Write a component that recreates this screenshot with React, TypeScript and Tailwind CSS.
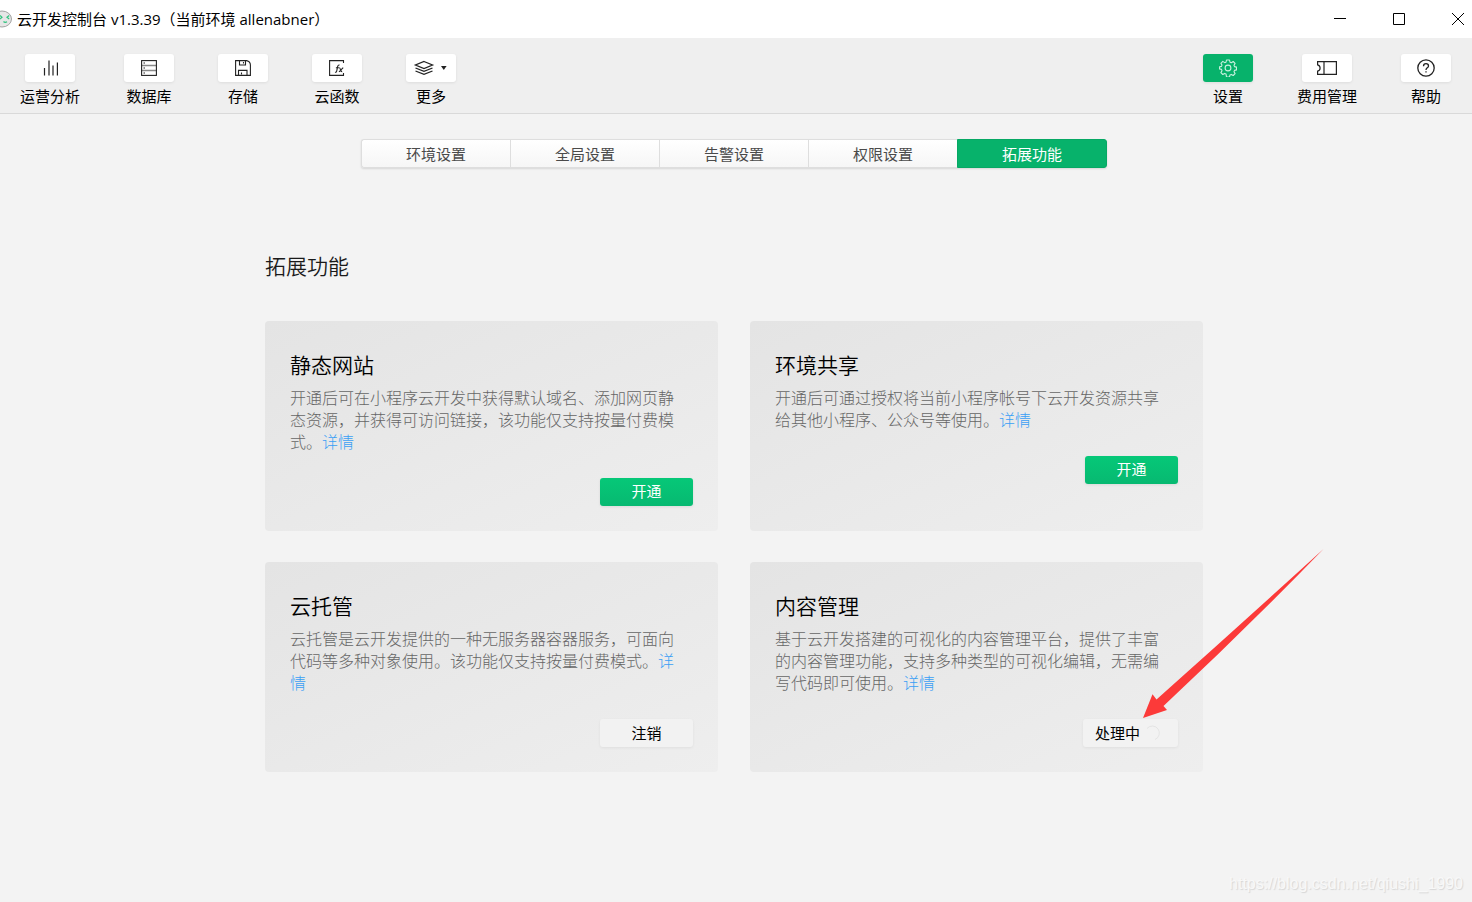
import React from "react";

function Logo() {
  return (
    <svg width="12" height="18" viewBox="0 0 12 18" aria-hidden="true">
      <ellipse cx="2" cy="9" rx="9.500" ry="8" fill="#e6e6e6" stroke="#a3a3a3" strokeWidth="1" />
      <path d="M0 5.500l2 1.800-2 1.800M9.200 5.500l-2.200 1.800 2.200 1.600" fill="none" stroke="#2fc47f" strokeWidth="1.200" />
      <path d="M3.500 11.500q1.500 1.500 3.500.2" fill="none" stroke="#2fc47f" strokeWidth="1.300" />
    </svg>
  );
}

function ChartIcon() {
  return (
    <svg width="16" height="16" viewBox="0 0 16 16" fill="none" stroke="#222" strokeWidth="1.2" aria-hidden="true">
      <path d="M2.500 8v7.500M7 0.500v15M11 5.500v10M15.400 2.500v13" />
    </svg>
  );
}

function DatabaseIcon() {
  return (
    <svg width="16" height="16" viewBox="0 0 16 16" fill="none" aria-hidden="true">
      <path d="M.5 5.500h15M.5 10.500h15" stroke="#888" strokeWidth="1.4" />
      <rect x=".6" y=".6" width="14.800" height="14.800" stroke="#222" strokeWidth="1.1" />
      <path d="M2.500 3h1.500M2.500 8h1.500M2.500 13h1.500" stroke="#222" />
    </svg>
  );
}

function DiskIcon() {
  return (
    <svg width="16" height="16" viewBox="0 0 16 16" fill="none" stroke="#222" strokeWidth="1.1" aria-hidden="true">
      <path d="M.6.600h11q3.800.8 3.800 4.500v10.300H.6z" />
      <path d="M4.500.600v4.400h6V.6M8.500 2v1.500" />
      <path d="M3.500 15.400v-5h8.500v5M6.500 12.500v2" />
    </svg>
  );
}

function FunctionIcon() {
  return (
    <svg width="16" height="16" viewBox="0 0 16 16" fill="none" stroke="#222" strokeWidth="1.1" aria-hidden="true">
      <path d="M14.500 3V.6H.6v14.800h13.900V13" />
      <path d="M6 12.200c1.200.3 1.600-.5 1.900-2l.7-3.500c.3-1.300.8-1.900 1.900-1.600M6.900 7.800h3" />
      <path d="M10.200 7.700c1.300-.2 1.200 4.300 3 3.900M14.200 7.600l-4.200 4.200" />
    </svg>
  );
}

function LayersIcon() {
  return (
    <svg width="38" height="16" viewBox="0 0 38 16" fill="none" aria-hidden="true">
      <path d="M12 1.500l8.500 3.500-8.500 3.500-8.500-3.500z" stroke="#222" strokeWidth="1.300" />
      <path d="M3.500 8l8.500 3.400 8.500-3.400M3.500 11l8.500 3.400 8.500-3.400" stroke="#222" strokeWidth="1.300" />
      <path d="M29 6h5.600l-2.800 4z" fill="#222" />
    </svg>
  );
}

function GearIcon() {
  return (
    <svg width="18" height="18" viewBox="0 0 18 18" fill="none" stroke="#c9f0de" strokeWidth="1.100" strokeLinejoin="round" aria-hidden="true">
      <path d="M7.500 1h3l.5 2.200 1.300.5 1.900-1.200 1.900 1.900-1.100 1.900.5 1.300 2 .5v2.800l-2 .5-.5 1.300 1.100 1.900-1.900 1.900-1.900-1.100-1.300.5-.5 2.100h-3L7 14.900l-1.300-.5-1.900 1.100-1.900-1.900L3 11.700l-.5-1.300-2-.5V7.900l2-.5L3 6.100 1.900 4.300l1.900-1.900 1.900 1.200L7 3.200z" />
      <circle cx="9" cy="9" r="2.900" />
    </svg>
  );
}

function TicketIcon() {
  return (
    <svg width="20" height="14" viewBox="0 0 20 14" fill="none" stroke="#222" strokeWidth="1.200" aria-hidden="true">
      <path d="M.6.600h18.800v12.800H.6v-3.200c1.600-.4 2.500-1.600 2.500-3.200S2.200 4.200.6 3.800zM7 .6v12.800" />
    </svg>
  );
}

function HelpIcon() {
  return (
    <svg width="18" height="18" viewBox="0 0 18 18" fill="none" stroke="#222" strokeWidth="1.300" aria-hidden="true">
      <circle cx="9" cy="9" r="8.200" />
      <path d="M6.500 7.200c0-1.500 1-2.500 2.500-2.500s2.500.9 2.500 2.200c0 1.800-2.500 2-2.500 4M9 12.300v1.300" />
    </svg>
  );
}

interface ToolProps {
  label: string;
  icon: React.ReactNode;
  active?: boolean;
}

function Tool({ label, icon, active }: ToolProps) {
  return (
    <button type="button" className="flex min-w-[50px] flex-col items-center">
      <span
        className={
          active
            ? "flex h-7 w-[50px] items-center justify-center rounded-[3px] bg-[#07b26b] shadow-[0_1px_3px_rgba(0,0,0,0.08)]"
            : "flex h-7 w-[50px] items-center justify-center rounded-[3px] bg-white shadow-[0_1px_3px_rgba(0,0,0,0.08)]"
        }
      >
        {icon}
      </span>
      <span className="mt-[3px] text-[15px] leading-[22px] whitespace-nowrap text-black">{label}</span>
    </button>
  );
}

const tabs = ["环境设置", "全局设置", "告警设置", "权限设置", "拓展功能"];

function Tabs() {
  return (
    <nav className="flex h-[29px] w-[746px] max-w-full rounded-[3px] shadow-[0_1px_2px_rgba(0,0,0,0.12)]">
      {tabs.map((tab) => (
        <button
          key={tab}
          type="button"
          className={
            tab === "拓展功能"
              ? "flex-1 rounded-r-[3px] border border-[#06a864] bg-[#07b26b] pt-px text-[15px] leading-[26px] text-white"
              : "flex-1 border border-r-0 border-[#dedede] bg-linear-to-b from-white to-[#f6f6f6] pt-px text-[15px] leading-[26px] text-[#4a4a4a] first:rounded-l-[3px]"
          }
        >
          {tab}
        </button>
      ))}
    </nav>
  );
}

interface CardProps {
  title: string;
  text: string;
  children: React.ReactNode;
}

function Card({ title, text, children }: CardProps) {
  return (
    <section className="rounded-[4px] bg-linear-to-br from-[#e4e4e4] to-[#eeeeee] p-[25px]">
      <h2 className="text-[21px] leading-[38px] font-[350] text-black">{title}</h2>
      <p className="mt-[3px] pr-2 text-base leading-[22px] font-light break-all text-[#666666]">
        {text}
        <a href="#detail" className="text-[#3a9ff5]">
          详情
        </a>
      </p>
      <div className="mt-[25px] flex justify-end">{children}</div>
    </section>
  );
}

function OpenButton() {
  return (
    <button
      type="button"
      className="h-7 w-[93px] rounded-[3px] bg-linear-to-b from-[#06c878] to-[#07b971] pb-0.5 text-[15px] leading-[26px] text-white shadow-[0_1px_3px_rgba(0,0,0,0.08)]"
    >
      开通
    </button>
  );
}

export default function App() {
  return (
    <div className="relative flex min-h-screen flex-col bg-[#f3f3f3] font-['Open_Sans','Noto_Sans_CJK_SC',sans-serif]">
      <header className="flex h-[38px] items-center justify-between bg-white">
        <div className="flex items-center gap-[5px]">
          <Logo />
          <h1 className="text-[15px] leading-6 text-black">云开发控制台 v1.3.39（当前环境 allenabner）</h1>
        </div>
        <div className="flex items-center gap-[47px] pr-2">
          <button type="button" aria-label="最小化">
            <svg width="12" height="12" viewBox="0 0 12 12" stroke="#000">
              <path d="M0 5.500h12" />
            </svg>
          </button>
          <button type="button" aria-label="最大化">
            <svg width="12" height="12" viewBox="0 0 12 12" fill="none" stroke="#000">
              <path d="M.5.500h11v11H.5z" />
            </svg>
          </button>
          <button type="button" aria-label="关闭">
            <svg width="12" height="12" viewBox="0 0 12 12" stroke="#000">
              <path d="M0 0l12 12M12 0L0 12" />
            </svg>
          </button>
        </div>
      </header>

      <div className="flex h-[76px] justify-between border-b border-[#d9d9d9] bg-[#efefef] pt-4 pr-[21px] pl-5">
        <div className="flex items-start gap-11">
          <Tool label="运营分析" icon={<ChartIcon />} />
          <Tool label="数据库" icon={<DatabaseIcon />} />
          <Tool label="存储" icon={<DiskIcon />} />
          <Tool label="云函数" icon={<FunctionIcon />} />
          <Tool label="更多" icon={<LayersIcon />} />
        </div>
        <div className="flex items-start gap-11">
          <Tool label="设置" icon={<GearIcon />} active />
          <Tool label="费用管理" icon={<TicketIcon />} />
          <Tool label="帮助" icon={<HelpIcon />} />
        </div>
      </div>

      <main className="flex flex-1 flex-col items-center pt-[25px] pr-1 pb-10">
        <Tabs />
        <div className="mt-[82px] w-full max-w-[938px]">
          <h2 className="text-[21px] leading-8 font-[350] text-[#1a1a1a]">拓展功能</h2>
          <div className="mt-[39px] grid grid-cols-2 gap-x-8 gap-y-[31px]">
            <Card
              title="静态网站"
              text="开通后可在小程序云开发中获得默认域名、添加网页静态资源，并获得可访问链接，该功能仅支持按量付费模式。"
            >
              <OpenButton />
            </Card>
            <Card
              title="环境共享"
              text="开通后可通过授权将当前小程序帐号下云开发资源共享给其他小程序、公众号等使用。"
            >
              <OpenButton />
            </Card>
            <Card
              title="云托管"
              text="云托管是云开发提供的一种无服务器容器服务，可面向代码等多种对象使用。该功能仅支持按量付费模式。"
            >
              <button
                type="button"
                className="h-7 w-[93px] rounded-[3px] bg-[#f2f2f2] text-[15px] leading-7 text-black shadow-[0_1px_3px_rgba(0,0,0,0.06)]"
              >
                注销
              </button>
            </Card>
            <Card
              title="内容管理"
              text="基于云开发搭建的可视化的内容管理平台，提供了丰富的内容管理功能，支持多种类型的可视化编辑，无需编写代码即可使用。"
            >
              <div className="relative">
                <button
                  type="button"
                  className="flex h-7 w-[95px] items-center gap-1 rounded-[3px] bg-[#f2f2f2] pl-3 text-[15px] leading-7 text-black shadow-[0_1px_3px_rgba(0,0,0,0.06)]"
                >
                  处理中
                  <svg width="16" height="16" viewBox="0 0 16 16" fill="none" stroke="#e4e4e4" aria-hidden="true">
                    <path d="M3 3.500A7 7 0 1 1 11 14.500" />
                  </svg>
                </button>
                <svg
                  className="pointer-events-none absolute bottom-full left-[60px]"
                  width="181"
                  height="170"
                  viewBox="0 0 181 170"
                  fill="#fc3a39"
                  aria-hidden="true"
                >
                  <path d="M0 169L9.500 145.300L13.500 150.500Q98 75 180.500 0Q104 79 20.500 157L24 161z" />
                </svg>
              </div>
            </Card>
          </div>
        </div>
      </main>

      <p className="pointer-events-none absolute right-[9px] bottom-2 font-['Liberation_Sans',sans-serif] text-base leading-5 text-[#f8f8f8] [text-shadow:1px_1px_1px_#d6d6d6]">
        https://blog.csdn.net/qiushi_1990
      </p>
    </div>
  );
}
